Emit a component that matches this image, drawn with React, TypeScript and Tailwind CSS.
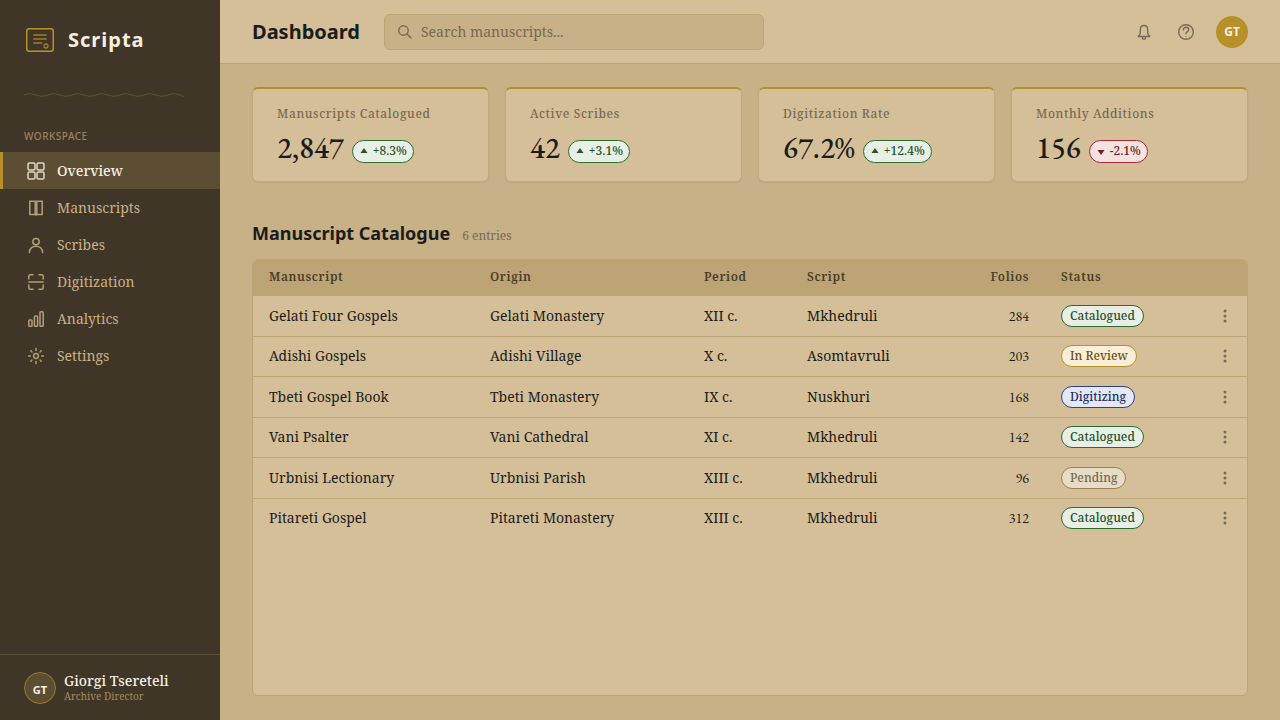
import type { ReactNode } from 'react'

type Trend = 'up' | 'down'
type Status = 'Catalogued' | 'In Review' | 'Digitizing' | 'Pending'

interface Stat {
  label: string
  value: string
  change: string
  trend: Trend
}

interface Manuscript {
  title: string
  origin: string
  period: string
  script: string
  folios: number
  status: Status
}

interface NavItem {
  label: string
  icon: ReactNode
}

const stats: Stat[] = [
  { label: 'Manuscripts Catalogued', value: '2,847', change: '+8.3%', trend: 'up' },
  { label: 'Active Scribes', value: '42', change: '+3.1%', trend: 'up' },
  { label: 'Digitization Rate', value: '67.2%', change: '+12.4%', trend: 'up' },
  { label: 'Monthly Additions', value: '156', change: '-2.1%', trend: 'down' },
]

const manuscripts: Manuscript[] = [
  { title: 'Gelati Four Gospels', origin: 'Gelati Monastery', period: 'XII c.', script: 'Mkhedruli', folios: 284, status: 'Catalogued' },
  { title: 'Adishi Gospels', origin: 'Adishi Village', period: 'X c.', script: 'Asomtavruli', folios: 203, status: 'In Review' },
  { title: 'Tbeti Gospel Book', origin: 'Tbeti Monastery', period: 'IX c.', script: 'Nuskhuri', folios: 168, status: 'Digitizing' },
  { title: 'Vani Psalter', origin: 'Vani Cathedral', period: 'XI c.', script: 'Mkhedruli', folios: 142, status: 'Catalogued' },
  { title: 'Urbnisi Lectionary', origin: 'Urbnisi Parish', period: 'XIII c.', script: 'Mkhedruli', folios: 96, status: 'Pending' },
  { title: 'Pitareti Gospel', origin: 'Pitareti Monastery', period: 'XIII c.', script: 'Mkhedruli', folios: 312, status: 'Catalogued' },
]

const statusStyles: Record<Status, string> = {
  Catalogued: 'bg-[#e8efe6] border-[#2d6a2e] text-[#265226]',
  'In Review': 'bg-[#f9efd9] border-[#b8902a] text-[#6b4f10]',
  Digitizing: 'bg-[#e3e8f4] border-[#2a4390] text-[#1f2f6b]',
  Pending: 'bg-[#e8dcc6] border-[#9a8255] text-[#756b54]',
}

const trendStyles: Record<Trend, string> = {
  up: 'bg-[#e8efe6] border-[#2d6a2e] text-[#265226]',
  down: 'bg-[#f5e3e3] border-[#ab2430] text-[#7c1a22]',
}

const navItems: NavItem[] = [
  {
    label: 'Overview',
    icon: (
      <>
        <rect x="2" y="2" width="7" height="7" rx="1.5" />
        <rect x="11" y="2" width="7" height="7" rx="1.5" />
        <rect x="2" y="11" width="7" height="7" rx="1.5" />
        <rect x="11" y="11" width="7" height="7" rx="1.5" />
      </>
    ),
  },
  {
    label: 'Manuscripts',
    icon: <path d="M3.8 3.2H9.2V16.5H3.8ZM16.2 3.2H10.8V16.5H16.2ZM10 16.5V17.2" />,
  },
  {
    label: 'Scribes',
    icon: (
      <>
        <circle cx="10" cy="6.6" r="3.2" />
        <path d="M3.4 17.6C3.4 13.6 6.2 11.2 10 11.2S16.6 13.6 16.6 17.6" />
      </>
    ),
  },
  {
    label: 'Digitization',
    icon: (
      <path d="M2.8 7V4.3A1.5 1.5 0 0 1 4.3 2.8H7M13 2.8H15.7A1.5 1.5 0 0 1 17.2 4.3V7M17.2 13V15.7A1.5 1.5 0 0 1 15.7 17.2H13M7 17.2H4.3A1.5 1.5 0 0 1 2.8 15.7V13M2.8 10H17.2" />
    ),
  },
  {
    label: 'Analytics',
    icon: (
      <>
        <rect x="2.8" y="11" width="3.2" height="6.3" rx="0.8" />
        <rect x="8.4" y="6.9" width="3.2" height="10.4" rx="0.8" />
        <rect x="14" y="2.8" width="3.2" height="14.5" rx="0.8" />
      </>
    ),
  },
  {
    label: 'Settings',
    icon: (
      <>
        <circle cx="10" cy="10" r="2.4" />
        <path d="M10 2.6V4.4M10 15.6V17.4M2.6 10H4.4M15.6 10H17.4M4.8 4.8L6 6M14 14L15.2 15.2M4.8 15.2L6 14M14 6L15.2 4.8" />
      </>
    ),
  },
]

function Sidebar() {
  return (
    <aside className="flex w-[220px] shrink-0 flex-col bg-[#403628]">
      <div className="flex items-center gap-3 px-6 pt-6">
        <svg width="32" height="32" viewBox="0 0 32 32" fill="none" stroke="#b8902a" strokeWidth="1.5" aria-hidden="true">
          <rect x="2.75" y="4.75" width="26.5" height="22.5" rx="2.5" />
          <g opacity="0.8">
            <path d="M9.3 11H22.6M9.3 15H22.6M9.3 19H18.3" />
            <circle cx="22" cy="22" r="2" strokeWidth="1.3" />
          </g>
        </svg>
        <span className="font-['Noto_Sans',sans-serif] text-xl font-bold tracking-wider text-[#f7f0e0]">Scripta</span>
      </div>

      <svg className="mx-6 mt-[33px]" width="160" height="12" viewBox="0 0 160 12" fill="none" stroke="#b8902a" strokeWidth="1" opacity="0.3" aria-hidden="true">
        <path d="M0 6Q6 3 12 6T24 6T36 6T48 6T60 6T72 6T84 6T96 6T108 6T120 6T132 6T144 6T156 6Q158 7 160 7.5" />
      </svg>

      <div className="px-6 pt-[27px] pb-2 font-['Noto_Sans',sans-serif] text-[10px] leading-4 font-medium tracking-wider text-[#9a8255]">
        WORKSPACE
      </div>

      <nav className="flex flex-col">
        {navItems.map((item, index) => (
          <a
            key={item.label}
            href="#"
            className={`flex h-[37px] items-center gap-[11px] border-l-3 pl-[23px] text-sm ${
              index === 0
                ? 'border-[#b8902a] bg-[#5c4e33] font-medium text-[#f7f0e0]'
                : 'border-transparent text-[#c8b087]'
            }`}
          >
            <svg
              width="20"
              height="20"
              viewBox="0 0 20 20"
              fill="none"
              stroke="currentColor"
              strokeWidth="1.5"
              strokeLinecap="round"
              opacity="0.85"
              aria-hidden="true"
            >
              {item.icon}
            </svg>
            {item.label}
          </a>
        ))}
      </nav>

      <div className="mt-auto flex h-[66px] items-center gap-2 border-t border-[#5c4e33] px-6">
        <div className="flex size-8 items-center justify-center rounded-full border border-[#9a7a26] bg-[#5c4e33] pt-1.5 font-['Noto_Sans',sans-serif] text-[11px] font-bold text-[#f7f0e0]">
          GT
        </div>
        <div>
          <div className="text-sm leading-4 font-medium text-[#f7f0e0]">Giorgi Tsereteli</div>
          <div className="text-[10px] leading-[14px] text-[#a58c5e]">Archive Director</div>
        </div>
      </div>
    </aside>
  )
}

function Header() {
  return (
    <header className="flex h-16 shrink-0 items-center border-b border-[#bda474] bg-[#d5bf99] px-8">
      <h1 className="font-['Noto_Sans',sans-serif] text-xl font-bold">Dashboard</h1>
      <label className="ml-6 flex h-9 w-[380px] items-center gap-2 rounded-md border border-[#bda474] bg-[#c8b087] px-3">
        <svg width="16" height="16" viewBox="0 0 16 16" fill="none" stroke="#756b54" strokeWidth="1.4" strokeLinecap="round" aria-hidden="true">
          <circle cx="6.5" cy="6.5" r="4.7" />
          <path d="M10 10L14 14" />
        </svg>
        <input
          type="search"
          aria-label="Search manuscripts"
          placeholder="Search manuscripts..."
          className="min-w-0 flex-1 bg-transparent text-sm outline-none placeholder:text-[#756b54]"
        />
      </label>
      <div className="ml-auto flex items-center gap-2.5">
        <button type="button" aria-label="Notifications" className="flex size-8 items-center justify-center text-[#756b54]">
          <svg width="18" height="18" viewBox="0 0 18 18" fill="none" stroke="currentColor" strokeWidth="1.4" strokeLinecap="round" strokeLinejoin="round" aria-hidden="true">
            <path d="M9 2.5C6.7 2.5 5.3 4.2 5.3 6.5V9.5C5.3 11.5 4.5 12.4 3.1 13.5H14.9C13.5 12.4 12.7 11.5 12.7 9.5V6.5C12.7 4.2 11.3 2.5 9 2.5Z" />
            <path d="M7.4 13.7V14.6A1.6 1.6 0 0 0 10.6 14.6V13.7" />
          </svg>
        </button>
        <button type="button" aria-label="Help" className="flex size-8 items-center justify-center text-[#756b54]">
          <svg width="18" height="18" viewBox="0 0 18 18" fill="none" stroke="currentColor" strokeWidth="1.4" strokeLinecap="round" aria-hidden="true">
            <circle cx="9" cy="9" r="7.3" />
            <path d="M6.4 6.7C6.4 5.2 7.5 4.3 9 4.3S11.7 5.3 11.7 6.7C11.7 8.5 9 8.7 9 10.6" />
            <circle cx="9" cy="13.3" r="0.6" fill="currentColor" stroke="none" />
          </svg>
        </button>
        <button type="button" className="ml-1 size-8 rounded-full bg-[#b8902a] font-['Noto_Sans',sans-serif] text-xs font-bold text-[#f7f0e0]">
          GT
        </button>
      </div>
    </header>
  )
}

function StatCard({ stat }: { stat: Stat }) {
  return (
    <div className="rounded-md border border-t-2 border-[#c2aa7c] border-t-[#b8902a] bg-[#d5bf99] px-6 pt-[15px] pb-[13px] shadow-xs">
      <div className="text-xs leading-5 font-medium tracking-wider text-[#756b54]">{stat.label}</div>
      <div className="mt-1 flex items-center gap-2">
        <span className="font-['EB_Garamond','Liberation_Serif',serif] text-[30px] leading-10 font-medium lining-nums tabular-nums">
          {stat.value}
        </span>
        <span className={`mt-1.5 inline-flex h-[23px] items-center gap-1 rounded-full border px-1.5 text-xs font-medium ${trendStyles[stat.trend]}`}>
          <svg width="10" height="10" viewBox="0 0 10 10" fill="currentColor" aria-hidden="true">
            {stat.trend === 'up' ? <path d="M5 2L8.5 7H1.5Z" /> : <path d="M5 9L8.5 4H1.5Z" />}
          </svg>
          {stat.change}
        </span>
      </div>
    </div>
  )
}

function CatalogueTable() {
  return (
    <div className="flex-1 overflow-hidden rounded-md border border-[#bda474] bg-[#d5bf99]">
      <table className="w-full table-fixed text-sm">
        <colgroup>
          <col className="w-[221px]" />
          <col className="w-[214px]" />
          <col className="w-[103px]" />
          <col className="w-[168px]" />
          <col className="w-[86px]" />
          <col className="w-[148px]" />
          <col className="w-[54px]" />
        </colgroup>
        <thead>
          <tr className="h-9 bg-[#bda474] text-left text-xs tracking-wider text-[#4a3d28]">
            <th className="px-4 pb-0.5 font-semibold">Manuscript</th>
            <th className="px-4 pb-0.5 font-semibold">Origin</th>
            <th className="px-4 pb-0.5 font-semibold">Period</th>
            <th className="px-4 pb-0.5 font-semibold">Script</th>
            <th className="px-4 pb-0.5 text-right font-semibold">Folios</th>
            <th className="px-4 pb-0.5 font-semibold">Status</th>
            <th aria-label="Actions" />
          </tr>
        </thead>
        <tbody>
          {manuscripts.map((item) => (
            <tr key={item.title} className="h-10 border-b border-[#bda474] last:border-b-0 nth-3:h-[41px] nth-5:h-[41px]">
              <td className="px-4">{item.title}</td>
              <td className="px-4">{item.origin}</td>
              <td className="px-4">{item.period}</td>
              <td className="px-4">{item.script}</td>
              <td className="px-4 text-right font-['EB_Garamond','Liberation_Serif',serif] lining-nums tabular-nums">{item.folios}</td>
              <td className="px-4">
                <span className={`inline-flex h-[22px] items-center rounded-full border px-2 align-middle text-xs font-medium ${statusStyles[item.status]}`}>
                  {item.status}
                </span>
              </td>
              <td>
                <button type="button" aria-label={`Actions for ${item.title}`} className="ml-6 block text-[#756b54]">
                  <svg width="16" height="16" viewBox="0 0 16 16" fill="currentColor" aria-hidden="true">
                    <circle cx="8" cy="3" r="1.5" />
                    <circle cx="8" cy="8" r="1.5" />
                    <circle cx="8" cy="13" r="1.5" />
                  </svg>
                </button>
              </td>
            </tr>
          ))}
        </tbody>
      </table>
    </div>
  )
}

export default function App() {
  return (
    <div className="flex min-h-screen bg-[#c8b087] font-['Noto_Serif','Liberation_Serif',serif] text-[#1c1c1a]">
      <Sidebar />
      <div className="flex min-w-0 flex-1 flex-col">
        <Header />
        <main className="flex flex-1 flex-col px-8 pt-[23px] pb-6">
          <div className="grid grid-cols-4 gap-4">
            {stats.map((stat) => (
              <StatCard key={stat.label} stat={stat} />
            ))}
          </div>
          <div className="mt-[37px] mb-3 flex items-baseline gap-3">
            <h2 className="font-['Noto_Sans',sans-serif] text-lg font-bold">Manuscript Catalogue</h2>
            <span className="text-xs text-[#756b54]">6 entries</span>
          </div>
          <CatalogueTable />
        </main>
      </div>
    </div>
  )
}
